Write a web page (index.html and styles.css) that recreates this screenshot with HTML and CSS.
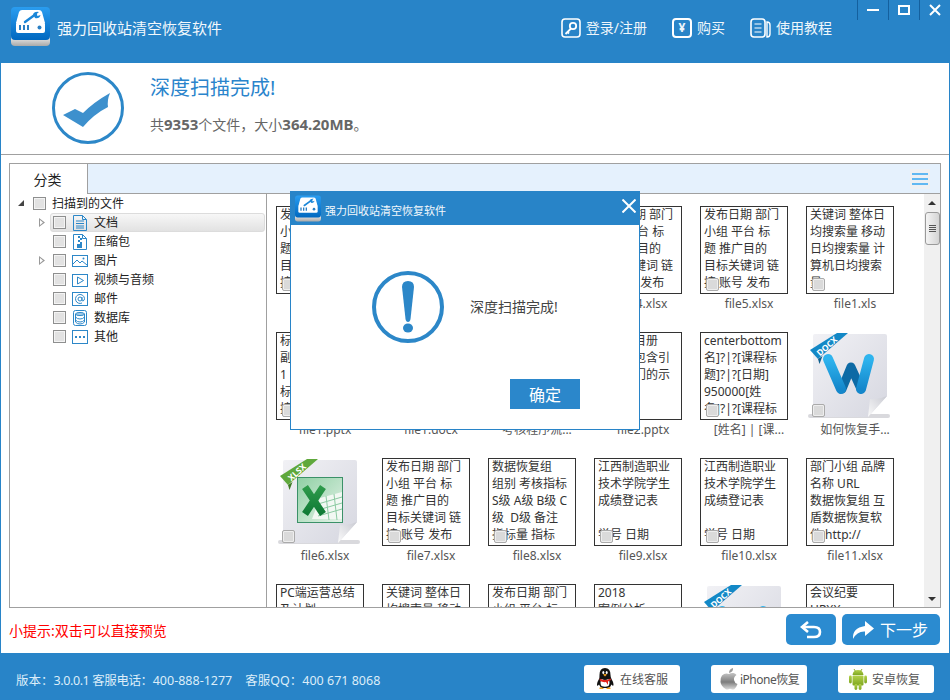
FILE: index.html
```html
<!DOCTYPE html>
<html lang="zh-CN">
<head>
<meta charset="utf-8">
<title>强力回收站清空恢复软件</title>
<link rel="stylesheet" href="styles.css">
</head>
<body>
<svg class="defs" width="0" height="0" aria-hidden="true">
  <defs>
    <linearGradient id="logoBlue" x1="0" y1="0" x2="0" y2="1"><stop offset="0" stop-color="#2a9df0"/><stop offset="1" stop-color="#0068c0"/></linearGradient>
    <linearGradient id="logoLip" x1="0" y1="0" x2="0" y2="1"><stop offset="0" stop-color="#f2f2f2"/><stop offset="1" stop-color="#a9a9a9"/></linearGradient>
    <linearGradient id="pageFill" x1="0" y1="0" x2="1" y2="1"><stop offset="0" stop-color="#f1f1f5"/><stop offset="1" stop-color="#d6d7e0"/></linearGradient>
    <linearGradient id="foldFill" x1="0" y1="1" x2="1" y2="0"><stop offset="0" stop-color="#fbfbfb"/><stop offset="1" stop-color="#c9cad2"/></linearGradient>
    <linearGradient id="wBlue" x1="0" y1="0" x2="0" y2="1"><stop offset="0" stop-color="#2fb4ee"/><stop offset="1" stop-color="#1487cb"/></linearGradient>
    <linearGradient id="xlsFill" x1="0" y1="0" x2="1" y2="1"><stop offset="0" stop-color="#8fd0a4"/><stop offset="1" stop-color="#e4f2e8"/></linearGradient>
    <linearGradient id="xMark" x1="0" y1="0" x2="0" y2="1"><stop offset="0" stop-color="#2d9a4a"/><stop offset="1" stop-color="#0f7a35"/></linearGradient>
    <linearGradient id="appleFill" x1="0" y1="0" x2="0" y2="1"><stop offset="0" stop-color="#c4c4c4"/><stop offset=".55" stop-color="#7d7d7d"/><stop offset="1" stop-color="#dcdcdc"/></linearGradient>
    <linearGradient id="droidFill" x1="0" y1="0" x2="0" y2="1"><stop offset="0" stop-color="#b4d24a"/><stop offset="1" stop-color="#7ea721"/></linearGradient>

    <symbol id="logo" viewBox="0 0 39 39">
      <path d="M0 29h39v6q0 4-4 4H4q-4 0-4-4z" fill="url(#logoLip)"/>
      <rect x="0" y="0" width="39" height="33" rx="4" fill="url(#logoBlue)"/>
      <path d="M11 3h17q2 0 3 2l3 11H5L8 5q1-2 3-2z" fill="#fff"/>
      <rect x="5" y="15" width="29" height="11" rx="2" fill="#fff"/>
      <path d="M14 15l11-8" stroke="#1a86d8" stroke-width="2.400" stroke-linecap="round" fill="none"/>
      <path d="M22 7q2-3 6-2l-2.500 2 1 2 3-1q-1 4-5.500 3z" fill="#1a86d8"/>
      <path d="M8 18h2v5H8zM12 18h2v5h-2zM16 18h2v5h-2z" fill="#2a7fc4"/>
      <circle cx="28.500" cy="20.500" r="2" fill="#2a7fc4"/>
    </symbol>

    <symbol id="docx" viewBox="0 0 88 88">
      <rect x="2" y="82" width="82" height="4" rx="2" fill="#c9c9cf" opacity=".7"/>
      <path d="M9 2h70q2 0 2 2v60L62 85H9q-2 0-2-2V4q0-2 2-2z" fill="url(#pageFill)"/>
      <path d="M81 64L62 85l2-18q8 1 17-3z" fill="url(#foldFill)"/>
      <path d="M4 18l8 9L42 1 31 1z" fill="#1388c6"/>
      <path d="M12 27l1.500 5 3-8z" fill="#0b5f8f"/>
      <text x="23" y="16.500" class="ribbon-text" transform="rotate(-42 23 16.500)">DOCX</text>
      <path d="M36 57l9-22 10 22" fill="none" stroke="#0d6aa5" stroke-width="9" stroke-linecap="round" stroke-linejoin="round"/>
      <path d="M22 27l13 30M63 27l-8 30" fill="none" stroke="url(#wBlue)" stroke-width="10" stroke-linecap="round"/>
    </symbol>

    <symbol id="xlsx" viewBox="0 0 88 88">
      <rect x="2" y="82" width="82" height="4" rx="2" fill="#c9c9cf" opacity=".7"/>
      <path d="M9 2h70q2 0 2 2v60L62 85H9q-2 0-2-2V4q0-2 2-2z" fill="url(#pageFill)"/>
      <path d="M81 64L62 85l2-18q8 1 17-3z" fill="url(#foldFill)"/>
      <path d="M4 18l8 9L42 1 31 1z" fill="#5fa83c"/>
      <path d="M12 27l1.500 5 3-8z" fill="#3d7a22"/>
      <text x="23" y="16.500" class="ribbon-text" transform="rotate(-42 23 16.500)">XLSX</text>
      <rect x="21.500" y="19.500" width="45" height="45" fill="url(#xlsFill)" stroke="#3b9168"/>
      <path d="M44 40l22-6v27H36z" fill="#f2f8f3"/>
      <path d="M42 46l24-7M42 52l24-7M42 58l24-7M50 38l3 24M58 36l3 26" stroke="#8ccaa2" fill="none"/>
      <path d="M29 29l18 27M47 29L29 56" stroke="url(#xMark)" stroke-width="7" fill="none"/>
    </symbol>
  </defs>
</svg>

<div class="app">
  <header class="header">
    <svg class="logo"><use href="#logo"/></svg>
    <div class="app-title">强力回收站清空恢复软件</div>
    <nav class="nav">
      <a class="nav-item">
        <svg class="nav-icon" viewBox="0 0 20 20"><rect x="1" y="1" width="18" height="18" rx="3" fill="none" stroke="#fff" stroke-width="1.600"/><circle cx="12" cy="8" r="3.200" fill="none" stroke="#fff" stroke-width="1.800"/><path d="M10 10.500l-5.500 5.500M6.500 14l1.500 1.500" stroke="#fff" stroke-width="1.800" fill="none"/></svg>
        <span class="nav-text">登录/注册</span>
      </a>
      <a class="nav-item">
        <span class="yen">¥</span>
        <span class="nav-text">购买</span>
      </a>
      <a class="nav-item">
        <svg class="nav-icon nav-book" viewBox="0 0 21 20"><rect x="1" y="1" width="14" height="18" rx="3" fill="none" stroke="#fff" stroke-width="1.600"/><path d="M4.500 6h7M4.500 10h7M4.500 14h7" stroke="#fff" stroke-width="1.200"/><path d="M17 4q3 0 3 3v9q0 3-3 3z" fill="none" stroke="#fff" stroke-width="1.400"/></svg>
        <span class="nav-text">使用教程</span>
      </a>
    </nav>
    <div class="win-controls">
      <div class="win-btn"><svg viewBox="0 0 12 12" class="win-icon"><path d="M0 6h12" stroke="#fff" stroke-width="2"/></svg></div>
      <div class="win-btn"><svg viewBox="0 0 12 12" class="win-icon"><rect x="1" y="2" width="10" height="8" fill="none" stroke="#fff" stroke-width="2"/></svg></div>
      <div class="win-btn"><svg viewBox="0 0 12 12" class="win-icon"><path d="M1 1l10 10M11 1L1 11" stroke="#fff" stroke-width="2"/></svg></div>
    </div>
  </header>

  <section class="summary">
    <svg class="status-icon" viewBox="0 0 72 72"><circle cx="36" cy="36" r="34.500" fill="none" stroke="#2c87c8" stroke-width="3"/><path d="M11 43l12-6 8 4q11-11 27-20-3 7-2 14-14 7-25 20z" fill="#3d90cd"/></svg>
    <div class="summary-text">
      <h1 class="summary-title">深度扫描完成!</h1>
      <p class="summary-sub">共<b>9353</b>个文件，大小<b>364.20MB</b>。</p>
    </div>
  </section>

  <section class="panel">
    <div class="tabs">
      <div class="tab">分类</div>
      <div class="tab-fill">
        <div class="menu-btn"><span></span><span></span><span></span></div>
      </div>
    </div>
    <div class="panel-body">
      <div class="tree">
        <div class="tree-row root">
          <span class="caret-slot"><i class="caret-open"></i></span>
          <span class="check"></span>
          <span>扫描到的文件</span>
        </div>
        <div class="tree-row">
          <span class="arrow-slot"><i class="caret-closed"></i></span>
          <div class="node selected"><span class="check"></span>
            <svg class="type-icon" viewBox="0 0 16 16"><path d="M1.500 .5h9l4 4v11h-13z M10.500 .5v4h4" fill="none" stroke="#2c87c8"/><path d="M4 6h8M4 8.500h8M4 11h8M4 13h8" stroke="#2c87c8"/></svg>
            <span>文档</span></div>
        </div>
        <div class="tree-row">
          <span class="arrow-slot"></span>
          <div class="node"><span class="check"></span>
            <svg class="type-icon" viewBox="0 0 16 16"><path d="M1.500 .5h9l4 4v11h-13z M10.500 .5v4h4" fill="none" stroke="#2c87c8"/><path d="M6 2h2v2H6zM8 4h2v2H8zM6 6h2v2H6zM8 8h2v2H8zM5 10h5v4H5z" fill="#2c87c8"/></svg>
            <span>压缩包</span></div>
        </div>
        <div class="tree-row">
          <span class="arrow-slot"><i class="caret-closed"></i></span>
          <div class="node"><span class="check"></span>
            <svg class="type-icon" viewBox="0 0 16 16"><rect x=".5" y="2.500" width="15" height="11" fill="none" stroke="#2c87c8"/><path d="M1 11l4-4 3 3 2-2 5 4" fill="none" stroke="#2c87c8"/><circle cx="11.500" cy="5.500" r="1" fill="#2c87c8"/></svg>
            <span>图片</span></div>
        </div>
        <div class="tree-row">
          <span class="arrow-slot"></span>
          <div class="node"><span class="check"></span>
            <svg class="type-icon" viewBox="0 0 16 16"><rect x=".5" y="2.500" width="15" height="12" fill="none" stroke="#2c87c8"/><path d="M5.500 5l6 3.500-6 3.500z" fill="none" stroke="#2c87c8"/></svg>
            <span>视频与音频</span></div>
        </div>
        <div class="tree-row">
          <span class="arrow-slot"></span>
          <div class="node"><span class="check"></span>
            <svg class="type-icon" viewBox="0 0 16 16"><rect x=".5" y="1.500" width="15" height="13" fill="none" stroke="#2c87c8"/><circle cx="8" cy="8" r="2" fill="none" stroke="#2c87c8"/><path d="M10 6v3q0 1 1 1 1.500-.5 1.500-2.500A4.500 4.500 0 1 0 10 12" fill="none" stroke="#2c87c8"/></svg>
            <span>邮件</span></div>
        </div>
        <div class="tree-row">
          <span class="arrow-slot"></span>
          <div class="node"><span class="check"></span>
            <svg class="type-icon" viewBox="0 0 16 16"><rect x="1.500" y=".5" width="13" height="15" rx="2" fill="none" stroke="#2c87c8"/><ellipse cx="8" cy="4" rx="4.500" ry="1.500" fill="#a9cfe9" stroke="#2c87c8"/><path d="M3.500 4v8q1.500 2 4.500 2t4.500-2V4M3.500 7q1.500 2 4.500 2t4.500-2M3.500 10q1.500 2 4.500 2t4.500-2" fill="none" stroke="#2c87c8"/></svg>
            <span>数据库</span></div>
        </div>
        <div class="tree-row">
          <span class="arrow-slot"></span>
          <div class="node"><span class="check"></span>
            <svg class="type-icon" viewBox="0 0 16 16"><rect x=".5" y="1.500" width="15" height="13" fill="none" stroke="#2c87c8"/><path d="M3 7h2v2H3zM7 7h2v2H7zM11 7h2v2h-2z" fill="#2c87c8"/></svg>
            <span>其他</span></div>
        </div>
      </div>

      <div class="files">
        <div class="file-grid">
          <div class="file"><div class="thumb"><div class="lines">发布日期 部门
小组 平台 标
题 推广目的
目标关键词 链
接 账号 发布</div><span class="pick"></span></div><div class="file-name">file2.xlsx</div></div>
          <div class="file"><div class="thumb"><div class="lines">发布日期 部门
小组 平台 标
题 推广目的
目标关键词 链
接 账号 发布</div><span class="pick"></span></div><div class="file-name">file3.xlsx</div></div>
          <div class="file"><div class="thumb"><div class="lines">发布日期 部门
小组 平台 标
题 推广目的
目标关键词 链
接 账号 发布</div><span class="pick"></span></div><div class="file-name">file3.xlsx</div></div>
          <div class="file"><div class="thumb"><div class="lines">发布日期 部门
小组 平台 标
题 推广目的
目标关键词 链
接 账号 发布</div><span class="pick"></span></div><div class="file-name">file4.xlsx</div></div>
          <div class="file"><div class="thumb"><div class="lines">发布日期 部门
小组 平台 标
题 推广目的
目标关键词 链
接 账号 发布</div><span class="pick"></span></div><div class="file-name">file5.xlsx</div></div>
          <div class="file"><div class="thumb"><div class="lines">关键词 整体日
均搜索量 移动
日均搜索量 计
算机日均搜索
量</div><span class="pick"></span></div><div class="file-name">file1.xls</div></div>

          <div class="file"><div class="thumb"><div class="lines">标题
副标题
1
标题
接</div><span class="pick"></span></div><div class="file-name">file1.pptx</div></div>
          <div class="file"><div class="thumb"><div class="lines">标题
副标题
1
标题
接</div><span class="pick"></span></div><div class="file-name">file1.docx</div></div>
          <div class="file"><div class="thumb"><div class="lines">课程
内容
1
标题
接</div><span class="pick"></span></div><div class="file-name">考核程序流...</div></div>
          <div class="file"><div class="thumb"><div class="lines">培训课目册
课程内包含引
指导部门的示</div><span class="pick"></span></div><div class="file-name">file2.pptx</div></div>
          <div class="file"><div class="thumb"><div class="lines">centerbottom
名]?|?[课程标
题]?|?[日期]
950000[姓
名]?|?[课程标</div><span class="pick"></span></div><div class="file-name">[姓名] | [课...</div></div>
          <div class="file"><div class="thumb plain"><svg class="file-art"><use href="#docx"/></svg><span class="pick"></span></div><div class="file-name">如何恢复手...</div></div>

          <div class="file"><div class="thumb plain"><svg class="file-art"><use href="#xlsx"/></svg><span class="pick"></span></div><div class="file-name">file6.xlsx</div></div>
          <div class="file"><div class="thumb"><div class="lines">发布日期 部门
小组 平台 标
题 推广目的
目标关键词 链
接 账号 发布</div><span class="pick"></span></div><div class="file-name">file7.xlsx</div></div>
          <div class="file"><div class="thumb"><div class="lines">数据恢复组
组别 考核指标
S级 A级 B级 C
级  D级 备注
指标量 指标</div><span class="pick"></span></div><div class="file-name">file8.xlsx</div></div>
          <div class="file"><div class="thumb"><div class="lines">江西制造职业
技术学院学生
成绩登记表

学号 日期</div><span class="pick"></span></div><div class="file-name">file9.xlsx</div></div>
          <div class="file"><div class="thumb"><div class="lines">江西制造职业
技术学院学生
成绩登记表

学号 日期</div><span class="pick"></span></div><div class="file-name">file10.xlsx</div></div>
          <div class="file"><div class="thumb"><div class="lines">部门小组 品牌
名称 URL
数据恢复组 互
盾数据恢复软
件 http://</div><span class="pick"></span></div><div class="file-name">file11.xlsx</div></div>

          <div class="file"><div class="thumb"><div class="lines">PC端运营总结
及计划</div></div></div>
          <div class="file"><div class="thumb"><div class="lines">关键词 整体日
均搜索量 移动</div></div></div>
          <div class="file"><div class="thumb"><div class="lines">发布日期 部门
小组 平台 标</div></div></div>
          <div class="file"><div class="thumb"><div class="lines">2018
案例分析</div></div></div>
          <div class="file"><div class="thumb plain"><svg class="file-art"><use href="#docx"/></svg></div></div>
          <div class="file"><div class="thumb"><div class="lines">会议纪要
HRXX</div></div></div>
        </div>
        <div class="scrollbar">
          <i class="sb-up"></i>
          <div class="sb-thumb"><span></span><span></span><span></span><span></span></div>
          <div class="sb-space"></div>
          <i class="sb-down"></i>
        </div>
      </div>
    </div>
  </section>

  <section class="actions">
    <div class="hint">小提示:双击可以直接预览</div>
    <button class="btn-back" type="button" aria-label="返回">
      <svg viewBox="0 0 22 20" class="back-icon"><path d="M8 2L2 7l6 5" fill="none" stroke="#fff" stroke-width="2.600"/><path d="M3 7h11q6 0 6 5t-6 5H7" fill="none" stroke="#fff" stroke-width="2.600"/></svg>
    </button>
    <button class="btn-next" type="button">
      <svg viewBox="0 0 22 18" class="next-icon"><path d="M13 0l9 7.500-9 7.500v-4.500Q5 10 1 18q-1-11 12-13z" fill="#fff"/></svg>
      <span class="next-text">下一步</span>
    </button>
  </section>

  <footer class="footer">
    <div class="version">版本：<span class="v-tight">3.0.0.1 客服电话：</span>400-888-1277&nbsp;&nbsp;&nbsp;&nbsp;客服QQ：400 671 8068</div>
    <div class="foot-btns">
      <a class="foot-btn">
        <svg class="foot-icon" viewBox="0 0 18 22"><path d="M9 0q5.500 0 5.500 7 0 2 1 4 3 5 1.500 7l-1.500-1.500q-1 2.500-3 3.500H6q-2-1-3-3.500L1.500 18Q0 16 3 11q.5-1 .5-4Q3.500 0 9 0z" fill="#111"/><path d="M5.500 11q3.500 2 7 0 2 4 0 7-3.500 1.500-7 0-2-3 0-7z" fill="#fff"/><path d="M3.500 10.500q5.500 3 11 0l.5 1.500-3 1.500v3.500l-2-3q-3 .5-6-1z" fill="#e3231b"/><path d="M7 6.500q2-1 4 0L9 8.500z" fill="#f3a21b"/><ellipse cx="7.300" cy="4.500" rx="1" ry="1.500" fill="#fff"/><ellipse cx="10.700" cy="4.500" rx="1" ry="1.500" fill="#fff"/><path d="M3 20q3-2 5 1H4zM15 20q-3-2-5 1h4z" fill="#f3a21b"/></svg>
        <span>在线客服</span>
      </a>
      <a class="foot-btn fb-iphone">
        <svg class="foot-icon" viewBox="0 0 18 22"><path d="M9 6q2-1.500 4.500-1 2 .5 3 2-3 2-2.500 5t3.500 4q-1 3-3 5-1.500 1-3 .2-1.500-.7-3 0-1.500.8-3-.2Q1 18 .5 14t1.500-6.500Q5 4.500 9 6z" fill="url(#appleFill)"/><path d="M9 5q0-4 4-5 .5 4-4 5z" fill="#9b9b9b"/></svg>
        <span>iPhone恢复</span>
      </a>
      <a class="foot-btn fb-droid">
        <svg class="foot-icon" viewBox="0 0 18 22"><path d="M3.500 7q.5-5 5.500-5t5.500 5z" fill="url(#droidFill)"/><path d="M5 1l1.500 2.500M13 1l-1.500 2.500" stroke="#8fb02c"/><rect x="3.500" y="7.500" width="11" height="10" rx="1" fill="url(#droidFill)"/><rect x="0" y="7.500" width="2.800" height="8" rx="1.400" fill="url(#droidFill)"/><rect x="15.200" y="7.500" width="2.800" height="8" rx="1.400" fill="url(#droidFill)"/><rect x="5.500" y="16" width="2.800" height="6" rx="1.400" fill="url(#droidFill)"/><rect x="9.700" y="16" width="2.800" height="6" rx="1.400" fill="url(#droidFill)"/></svg>
        <span>安卓恢复</span>
      </a>
    </div>
  </footer>

  <div class="modal">
    <div class="modal-bar">
      <svg class="modal-logo"><use href="#logo"/></svg>
      <div class="modal-title">强力回收站清空恢复软件</div>
      <svg class="modal-close" viewBox="0 0 14 14"><path d="M.5 .5l13 13M13.500 .5l-13 13" stroke="#fff" stroke-width="2"/></svg>
    </div>
    <div class="modal-body">
      <svg class="alert-icon" viewBox="0 0 72 72"><circle cx="36" cy="36" r="34" fill="none" stroke="#2c87c8" stroke-width="4"/><path d="M30 16q0-6 6-6t6 6l-3.500 32q-.5 3-2.500 3t-2.500-3z" fill="#2c87c8"/><ellipse cx="36" cy="57" rx="5" ry="4.500" fill="#2c87c8"/></svg>
      <div class="modal-msg">深度扫描完成!</div>
    </div>
    <div class="modal-foot"><button class="modal-ok" type="button">确定</button></div>
  </div>
</div>
</body>
</html>
```

FILE: styles.css
```css
* { box-sizing: border-box; }
html, body { margin: 0; padding: 0; }
body {
  width: 950px;
  height: 700px;
  overflow: hidden;
  background: #fff;
  font-family: "Noto Sans", "Noto Sans CJK SC", sans-serif;
  font-size: 12px;
  color: #333;
}
.defs { position: absolute; }
.app {
  position: relative;
  width: 950px;
  height: 700px;
  display: flex;
  flex-direction: column;
  border-left: 1px solid #2884c8;
  border-right: 1px solid #2884c8;
  background: #fff;
}

/* header */
.header {
  height: 63px;
  flex: none;
  display: flex;
  align-items: flex-start;
  background: #2884c8;
  color: #fff;
}
.logo { width: 39px; height: 39px; margin: 7px 0 0 10px; flex: none; }
.app-title { margin-left: 7px; font-size: 15px; line-height: 56px; color: #f2f8fc; }
.nav { margin-left: auto; margin-right: 25px; height: 56px; display: flex; align-items: center; gap: 25px; }
.nav-item { display: flex; align-items: center; gap: 5px; font-size: 14px; color: #eef6fb; }
.nav-text { padding-bottom: 2px; }
.nav-icon { width: 20px; height: 20px; flex: none; }
.nav-book { width: 21px; }
.yen {
  width: 20px;
  height: 20px;
  border: 2px solid #fff;
  border-radius: 4px;
  font-size: 12px;
  line-height: 15px;
  text-align: center;
  font-weight: 700;
  flex: none;
}
.win-controls { display: flex; flex: none; }
.win-btn {
  width: 31px;
  height: 20px;
  border-left: 1px solid #14609e;
  display: flex;
  align-items: flex-start;
  justify-content: center;
  padding-top: 4px;
}
.win-btn:last-child { width: 30px; }
.win-icon { width: 12px; height: 12px; }

/* summary */
.summary {
  height: 92px;
  flex: none;
  display: flex;
  align-items: flex-start;
  padding: 9px 0 0 51px;
  gap: 26px;
  border-bottom: 1px solid #a0a0a0;
}
.status-icon { width: 72px; height: 72px; flex: none; }
.summary-text { padding-top: 2px; }
.summary-title { margin: 0; font-size: 20px; line-height: 28px; font-weight: 400; color: #2a84cc; }
.summary-sub { margin: 12px 0 0; font-size: 14px; line-height: 20px; color: #666; }
.summary-sub b { font-weight: 700; font-size: 15px; }

/* panel */
.panel {
  height: 445px;
  flex: none;
  margin: 8px 8px 0;
  border: 1px solid #a0a0a0;
  display: flex;
  flex-direction: column;
  overflow: hidden;
}
.tabs { height: 30px; flex: none; display: flex; }
.tab {
  width: 78px;
  border-right: 1px solid #a0a0a0;
  text-align: center;
  font-size: 14px;
  line-height: 32px;
  color: #222;
  padding-right: 2px;
}
.tab-fill {
  flex: 1;
  background: #e5f1fd;
  border-bottom: 1px solid #a0a0a0;
  display: flex;
  justify-content: flex-end;
  align-items: flex-start;
  padding: 5px 10px 0 0;
}
.menu-btn {
  width: 20px;
  height: 20px;
  background: #eef0f3;
  display: flex;
  flex-direction: column;
  justify-content: center;
  gap: 3px;
  padding: 0 2px;
}
.menu-btn span { display: block; height: 2px; background: #62b8f2; }
.panel-body { flex: 1; display: flex; min-height: 0; }

/* tree */
.tree { width: 257px; flex: none; border-right: 1px solid #a0a0a0; color: #222; }
.tree-row { height: 19px; display: flex; align-items: center; line-height: 18px; }
.root { gap: 6px; }
.caret-slot { width: 17px; height: 19px; flex: none; position: relative; }
.caret-open {
  position: absolute;
  left: 8px;
  top: 6px;
  border-style: solid;
  border-width: 0 0 6px 6px;
  border-color: transparent transparent #444 transparent;
}
.arrow-slot { width: 40px; height: 19px; flex: none; position: relative; }
.caret-closed {
  position: absolute;
  left: 29px;
  top: 5px;
  width: 6px;
  height: 9px;
  background: #999;
  clip-path: polygon(0 0, 100% 50%, 0 100%, 0 0, 1px 2px, 1px 7px, 4px 4.500px, 1px 2px);
}
.node {
  flex: 1;
  height: 19px;
  margin-right: 1px;
  display: flex;
  align-items: center;
  gap: 6px;
  padding-left: 3px;
}
.node.selected {
  padding-left: 2px;
  border: 1px solid #dcdcdc;
  border-radius: 3px;
  background: linear-gradient(#f7f7f7, #e2e2e2);
}
.check {
  width: 13px;
  height: 13px;
  flex: none;
  border: 1px solid #8e8f8f;
  background: #e2e2e2;
  box-shadow: inset 0 0 0 1px #f4f4f4;
}
.type-icon { width: 16px; height: 16px; flex: none; }

/* files */
.files { flex: 1; min-width: 0; display: flex; position: relative; }
.file-grid {
  flex: 1;
  min-width: 0;
  padding: 12px 0 0 9px;
  display: grid;
  grid-template-columns: repeat(6, 106px);
  grid-auto-rows: 126px;
  align-content: start;
  overflow: hidden;
}
.file { width: 98px; }
.thumb {
  position: relative;
  width: 88px;
  height: 88px;
  border: 1px solid #333;
  overflow: hidden;
  padding: 0 0 0 3px;
  background: #fff;
}
.thumb.plain { border: 0; padding: 0; overflow: visible; }
.lines {
  white-space: pre;
  line-height: 17px;
  font-size: 12px;
  color: #333;
  margin-top: -1px;
}
.pick {
  position: absolute;
  left: 5px;
  bottom: 2px;
  width: 13px;
  height: 13px;
  border: 1px solid #aaa;
  border-radius: 2px;
  background: #dadada;
  box-shadow: inset 0 0 0 1px #eee;
}
.thumb.plain .pick { left: 6px; bottom: 3px; }
.file-art { display: block; width: 88px; height: 88px; }
.ribbon-text { font: 700 8.5px "Noto Sans", sans-serif; fill: #fff; text-anchor: middle; }
.file-name {
  margin-top: 1px;
  width: 98px;
  text-align: center;
  line-height: 17px;
  font-size: 12px;
  color: #555;
  white-space: nowrap;
}
.scrollbar {
  width: 16px;
  flex: none;
  background: #f0f0f0;
  display: flex;
  flex-direction: column;
  align-items: center;
}
.sb-up {
  margin-top: 7px;
  border-style: solid;
  border-width: 0 4px 4px;
  border-color: transparent transparent #333;
}
.sb-thumb {
  margin-top: 7px;
  width: 15px;
  height: 33px;
  border: 1px solid #9a9a9a;
  border-radius: 3px;
  background: linear-gradient(90deg, #f4f4f4, #d4d4d4);
  display: flex;
  flex-direction: column;
  align-items: center;
  justify-content: center;
  gap: 1px;
}
.sb-thumb span { display: block; width: 7px; height: 1px; background: #555; }
.sb-space { flex: 1; }
.sb-down {
  margin-bottom: 6px;
  border-style: solid;
  border-width: 4px 4px 0;
  border-color: #333 transparent transparent;
}

/* actions */
.actions {
  flex: 1;
  display: flex;
  align-items: flex-start;
  padding: 6px 9px 0 8px;
  gap: 6px;
}
.hint { margin-right: auto; font-size: 14px; line-height: 20px; padding-top: 7px; color: #f00; }
.btn-back, .btn-next {
  height: 31px;
  border: 0;
  border-radius: 5px;
  background: #2b8bd0;
  color: #fff;
  padding: 0;
  display: flex;
  align-items: center;
  justify-content: center;
  font-family: inherit;
}
.btn-back { width: 50px; }
.back-icon { width: 22px; height: 20px; }
.btn-next { width: 98px; gap: 6px; padding-right: 2px; font-size: 16px; }
.next-text { padding-bottom: 2px; }
.next-icon { width: 22px; height: 18px; flex: none; }

/* footer */
.footer {
  height: 47px;
  flex: none;
  background: #2884c8;
  display: flex;
  align-items: center;
  padding: 5px 0 0 15px;
}
.version { font-size: 12.500px; color: #dcedf9; white-space: nowrap; }
.v-tight { letter-spacing: -.4px; }
.foot-btns { margin-left: auto; margin-right: 15px; display: flex; gap: 31px; }
.foot-btn {
  width: 96px;
  height: 28px;
  background: #fff;
  border-radius: 3px;
  display: flex;
  align-items: center;
  gap: 6px;
  padding-left: 12px;
  font-size: 12px;
  color: #555;
}
.fb-iphone { padding-left: 9px; gap: 2px; letter-spacing: -.5px; }
.fb-droid { padding-left: 11px; gap: 5px; }
.foot-icon { width: 18px; height: 22px; flex: none; }

/* modal */
.modal {
  position: absolute;
  left: 289px;
  top: 191px;
  width: 350px;
  height: 239px;
  background: #fff;
  border: 1px solid #2884c8;
  display: flex;
  flex-direction: column;
}
.modal-bar {
  height: 34px;
  flex: none;
  margin: -1px -1px 0;
  background: #2884c8;
  display: flex;
  align-items: center;
  padding: 0 4px 0 5px;
}
.modal-logo { width: 26px; height: 27px; flex: none; }
.modal-title { margin-left: 4px; font-size: 11px; padding-top: 3px; color: #f2f8fc; }
.modal-close { width: 14px; height: 14px; margin-left: auto; margin-top: -5px; }
.modal-body { display: flex; align-items: flex-start; padding: 46px 0 0 81px; gap: 26px; }
.alert-icon { width: 72px; height: 72px; flex: none; }
.modal-msg { margin-top: 26px; font-size: 14px; line-height: 20px; color: #444; }
.modal-foot { margin-top: 36px; padding-left: 219px; }
.modal-ok {
  width: 70px;
  height: 30px;
  border: 0;
  background: #2b87cb;
  color: #fff;
  font-family: inherit;
  font-size: 16px;
  padding: 0;
}
```
